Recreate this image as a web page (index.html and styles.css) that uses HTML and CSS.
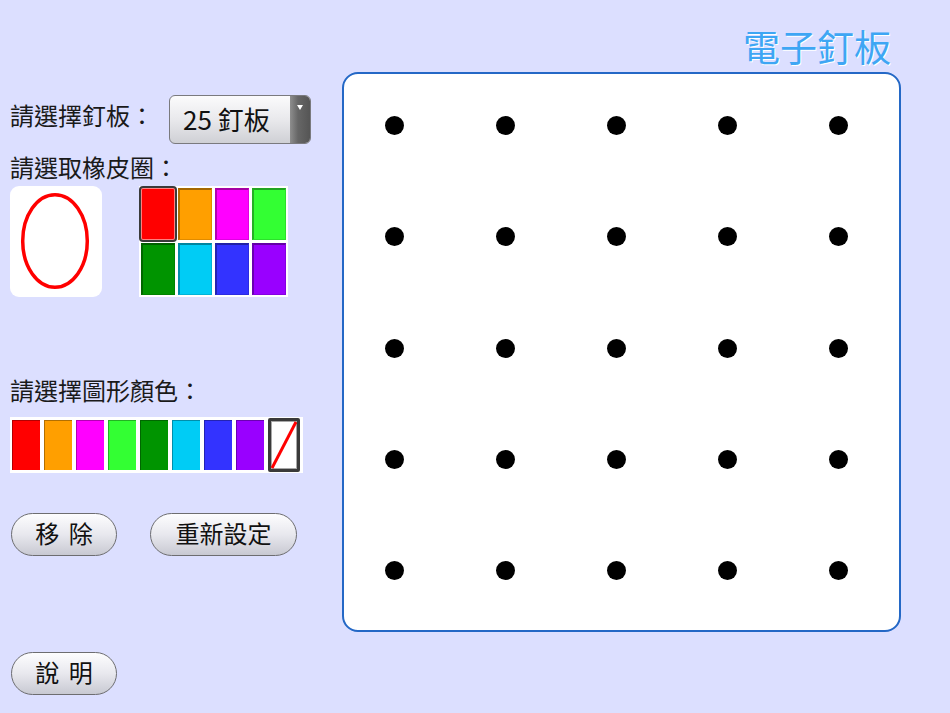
FILE: index.html
```html
<!DOCTYPE html>
<html lang="zh-Hant">
<head>
<meta charset="utf-8">
<title>電子釘板</title>
<link rel="stylesheet" href="styles.css">
</head>
<body>
<div class="app">
  <aside class="panel">
    <div class="row-board">
      <div class="label label-first">請選擇釘板：</div>
      <div class="select">
        <span class="select-text">25 釘板</span>
        <span class="select-arrow"><span class="tri"></span></span>
      </div>
    </div>
    <div class="label label-band">請選取橡皮圈：</div>
    <div class="row-band">
      <div class="preview">
        <svg width="92" height="111" viewBox="0 0 92 111">
          <ellipse cx="45" cy="55" rx="32.3" ry="46.3" fill="none" stroke="#ff0000" stroke-width="3.5"/>
        </svg>
      </div>
      <div class="band-grid">
        <div class="cell selected" style="background:#ff0000"></div>
        <div class="cell" style="background:#ff9f00"></div>
        <div class="cell" style="background:#ff00ff"></div>
        <div class="cell" style="background:#33ff33"></div>
        <div class="cell" style="background:#009400"></div>
        <div class="cell" style="background:#00ccf5"></div>
        <div class="cell" style="background:#3333ff"></div>
        <div class="cell" style="background:#9900ff"></div>
      </div>
    </div>
    <div class="label label-fill">請選擇圖形顏色：</div>
    <div class="fill-row">
      <div class="fcell" style="background:#ff0000"></div>
      <div class="fcell" style="background:#ff9f00"></div>
      <div class="fcell" style="background:#ff00ff"></div>
      <div class="fcell" style="background:#33ff33"></div>
      <div class="fcell" style="background:#009400"></div>
      <div class="fcell" style="background:#00ccf5"></div>
      <div class="fcell" style="background:#3333ff"></div>
      <div class="fcell" style="background:#9900ff"></div>
      <div class="fcell none">
        <svg width="26" height="48" viewBox="0 0 26 48">
          <line x1="1" y1="47" x2="25" y2="1" stroke="#ff0000" stroke-width="3"/>
        </svg>
      </div>
    </div>
    <div class="btn-row">
      <button class="btn btn-small">移 除</button>
      <button class="btn btn-wide">重新設定</button>
    </div>
    <div class="help-row">
      <button class="btn btn-small">說 明</button>
    </div>
  </aside>
  <main class="main">
    <h1 class="title">電子釘板</h1>
    <div class="board">
      <div class="pegs">
        <span class="peg"></span><span class="peg"></span><span class="peg"></span><span class="peg"></span><span class="peg"></span>
        <span class="peg"></span><span class="peg"></span><span class="peg"></span><span class="peg"></span><span class="peg"></span>
        <span class="peg"></span><span class="peg"></span><span class="peg"></span><span class="peg"></span><span class="peg"></span>
        <span class="peg"></span><span class="peg"></span><span class="peg"></span><span class="peg"></span><span class="peg"></span>
        <span class="peg"></span><span class="peg"></span><span class="peg"></span><span class="peg"></span><span class="peg"></span>
      </div>
    </div>
  </main>
</div>
</body>
</html>
```
FILE: styles.css
```css
* { box-sizing: border-box; }
html, body {
  margin: 0;
  padding: 0;
  width: 950px;
  height: 713px;
  overflow: hidden;
  background: #dcdfff;
  font-family: "Noto Sans CJK TC", "Noto Sans", sans-serif;
  color: #1a1a1a;
}
.app {
  display: flex;
  align-items: flex-start;
}
.panel {
  flex: 0 0 342px;
  padding: 95px 0 0 10px;
  display: flex;
  flex-direction: column;
}
.label {
  font-size: 24px;
  line-height: 30px;
  height: 30px;
  white-space: nowrap;
}
.row-board {
  display: flex;
  align-items: flex-start;
  gap: 15px;
  height: 49px;
}
.label-first { margin-top: 5px; width: 144px; }
.select {
  width: 142px;
  height: 49px;
  border: 1px solid #7a7a7e;
  border-radius: 6px;
  display: flex;
  overflow: hidden;
  background: linear-gradient(#fbfbfc, #e9e9ec 50%, #cfd0d5);
}
.select-text {
  flex: 1;
  font-size: 26px;
  line-height: 46px;
  padding-left: 13px;
  color: #111;
  white-space: nowrap;
}
.select-arrow {
  width: 20px;
  background: linear-gradient(90deg, #8e8e8e, #666666 40%, #555555);
  display: flex;
  justify-content: center;
  padding-top: 9px;
}
.tri {
  width: 0;
  height: 0;
  border-left: 3px solid transparent;
  border-right: 3px solid transparent;
  border-top: 5px solid #ffffff;
}
.label-band { margin: 8px 0 4px; }
.row-band {
  display: flex;
  align-items: flex-start;
  gap: 37px;
  height: 111px;
}
.preview {
  width: 92px;
  height: 111px;
  background: #ffffff;
  border-radius: 9px;
}
.preview svg { display: block; }
.band-grid {
  background: #ffffff;
  padding: 2px;
  display: grid;
  grid-template-columns: repeat(4, 34px);
  grid-template-rows: repeat(2, 52px);
  column-gap: 3px;
  row-gap: 3px;
}
.cell {
  border-top: 2px solid rgba(0, 0, 0, 0.35);
  border-left: 2px solid rgba(0, 0, 0, 0.3);
  border-right: 1px solid rgba(0, 0, 0, 0.12);
  border-bottom: 1px solid rgba(0, 0, 0, 0.12);
}
.cell.selected {
  border: 1px solid rgba(255, 255, 255, 0.5);
  box-shadow: 0 0 0 2px #3a3a3a;
  border-radius: 2px;
}
.label-fill { margin-top: 78px; }
.fill-row {
  margin-top: 12px;
  width: 293px;
  height: 56px;
  background: #ffffff;
  padding: 3px 2px;
  display: flex;
  gap: 4px;
}
.fcell {
  width: 28px;
  height: 50px;
  border-top: 1px solid rgba(0, 0, 0, 0.3);
  border-left: 1px solid rgba(0, 0, 0, 0.3);
}
.fcell.none {
  width: 32px;
  height: 54px;
  margin: -2px 0;
  background: #ffffff;
  border: 3px solid #3a3a3a;
  border-radius: 2px;
  box-shadow: inset 0 0 0 1px #a8a8a8;
}
.fcell.none svg { display: block; }
.btn-row {
  margin-top: 40px;
  display: flex;
  gap: 33px;
  padding-left: 1px;
}
.help-row {
  margin-top: 96px;
  padding-left: 1px;
}
.btn {
  height: 43px;
  border: 1px solid #6d6d70;
  border-radius: 22px;
  background: linear-gradient(#fdfdfe, #e8e8ee 50%, #c8c9d2);
  font-family: "Noto Sans CJK TC", "Noto Sans", sans-serif;
  font-size: 24px;
  line-height: 36px;
  padding: 0 0 3px;
  color: #111;
  margin: 0;
}
.btn-small { width: 106px; word-spacing: 4px; }
.btn-wide { width: 147px; }
.main {
  width: 559px;
  padding-top: 24px;
}
.title {
  margin: 0 0 4px;
  font-size: 37px;
  line-height: 44px;
  height: 44px;
  font-weight: normal;
  text-align: right;
  padding-right: 10px;
  color: #3ea6f4;
  text-shadow: 1px 1px 0 #ffffff;
}
.board {
  width: 559px;
  height: 560px;
  background: #ffffff;
  border: 2px solid #2468c6;
  border-radius: 16px;
}
.pegs {
  padding: 42px 0 0 41px;
  display: grid;
  grid-template-columns: repeat(5, 19px);
  grid-template-rows: repeat(5, 19px);
  column-gap: 92px;
  row-gap: 92.25px;
}
.peg {
  width: 19px;
  height: 19px;
  border-radius: 50%;
  background: #000000;
}
```
